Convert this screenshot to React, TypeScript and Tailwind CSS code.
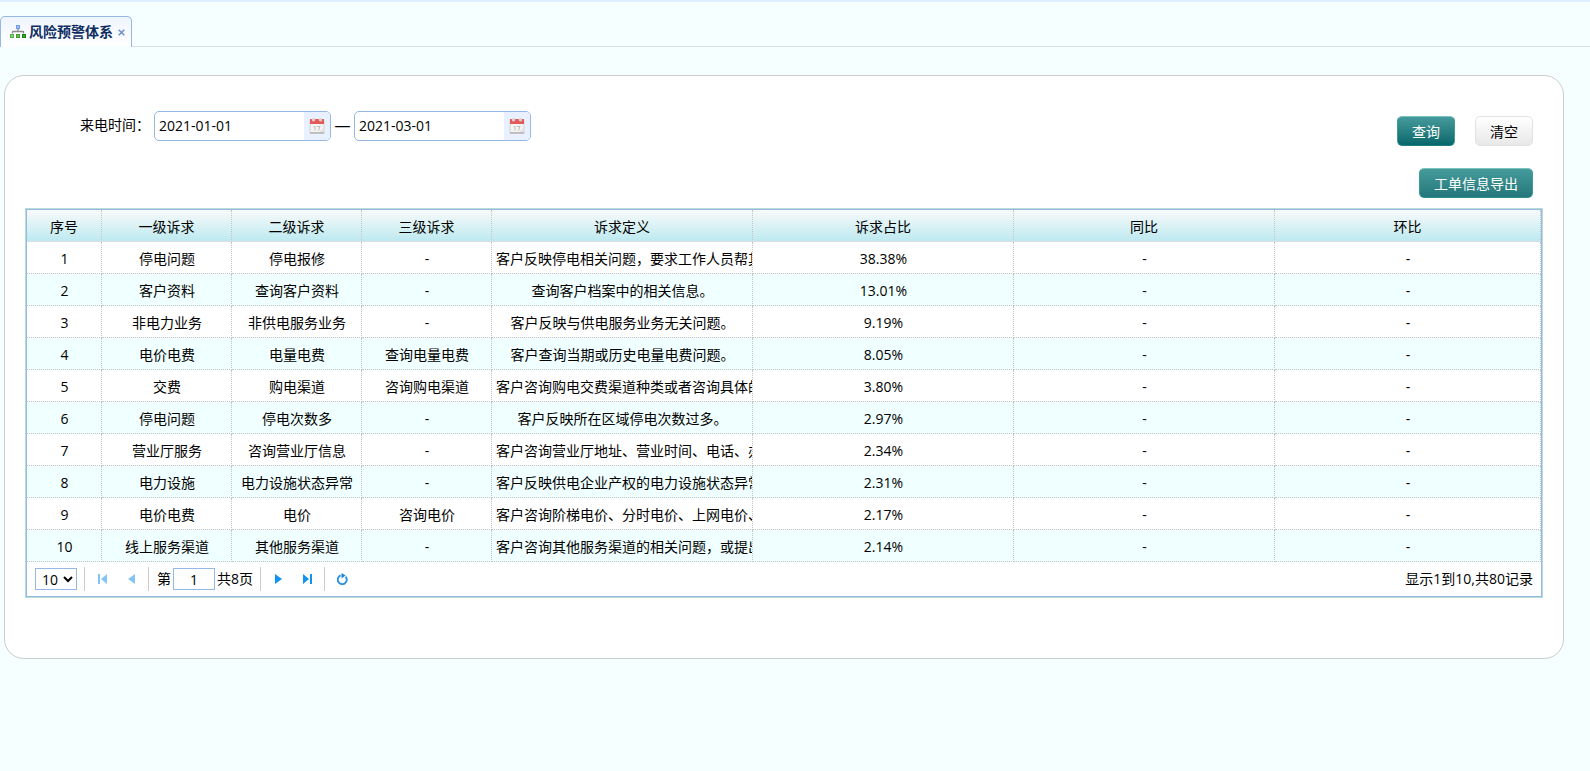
import { useState } from "react";

type Row = [string, string, string, string, string];

const ROWS: Row[] = [
  ["停电问题", "停电报修", "-", "客户反映停电相关问题，要求工作人员帮其处理。", "38.38%"],
  ["客户资料", "查询客户资料", "-", "查询客户档案中的相关信息。", "13.01%"],
  ["非电力业务", "非供电服务业务", "-", "客户反映与供电服务业务无关问题。", "9.19%"],
  ["电价电费", "电量电费", "查询电量电费", "客户查询当期或历史电量电费问题。", "8.05%"],
  ["交费", "购电渠道", "咨询购电渠道", "客户咨询购电交费渠道种类或者咨询具体的渠道。", "3.80%"],
  ["停电问题", "停电次数多", "-", "客户反映所在区域停电次数过多。", "2.97%"],
  ["营业厅服务", "咨询营业厅信息", "-", "客户咨询营业厅地址、营业时间、电话、办理业务。", "2.34%"],
  ["电力设施", "电力设施状态异常", "-", "客户反映供电企业产权的电力设施状态异常问题。", "2.31%"],
  ["电价电费", "电价", "咨询电价", "客户咨询阶梯电价、分时电价、上网电价、电价政策。", "2.17%"],
  ["线上服务渠道", "其他服务渠道", "-", "客户咨询其他服务渠道的相关问题，或提出建议。", "2.14%"],
];

const HEADERS = ["序号", "一级诉求", "二级诉求", "三级诉求", "诉求定义", "诉求占比", "同比", "环比"];

function OrgIcon() {
  return (
    <svg width="16" height="14" viewBox="0 0 16 14" aria-hidden="true">
      <path d="M8 4v3M2.5 8.5V7q0-.5.5-.5h10q.5 0 .5.5v1.5" fill="none" stroke="#8a8a8a" strokeWidth="1.3" />
      <rect x="6" y="0" width="4" height="4" fill="#6d9ae8" />
      <rect x="7" y="1" width="2" height="2" fill="#a4c3f5" />
      <rect x="0" y="9" width="4" height="4" fill="#5aae4c" />
      <rect x="1" y="10" width="2" height="2" fill="#8bcb7d" />
      <rect x="6" y="9" width="4" height="4" fill="#3f9e2f" />
      <rect x="7" y="10" width="2" height="2" fill="#6dbb5c" />
      <rect x="12" y="9" width="4" height="4" fill="#1f7d18" />
      <rect x="13" y="10" width="2" height="2" fill="#3fa332" />
    </svg>
  );
}

function CalendarIcon() {
  return (
    <svg width="16" height="18" viewBox="0 0 16 18" aria-hidden="true">
      <rect x="1" y="3" width="14" height="13.5" rx="1" fill="#f4f4f4" stroke="#cccccc" strokeWidth="0.8" />
      <rect x="1" y="2" width="14" height="5" fill="#e25a5a" />
      <rect x="1" y="15" width="14" height="1.8" fill="#bdbdbd" />
      <circle cx="4.5" cy="2.8" r="1.7" fill="#dcd2d2" />
      <circle cx="11.5" cy="2.8" r="1.7" fill="#dcd2d2" />
      <path d="M4.8 10l1.2-.8v4.4M8 9.5h3l-1.6 4.1" fill="none" stroke="#bcbcbc" strokeWidth="1" />
      <path d="M10.5 15l4.5-4.5V15z" fill="#e2e2e2" />
    </svg>
  );
}

function DateField({ id, label, initial }: { id: string; label: string; initial: string }) {
  const [value, setValue] = useState(initial);
  return (
    <div className="flex h-[30px] w-[177px] overflow-hidden rounded-[5px] border border-[#95b8e7] bg-white">
      <input
        id={id}
        aria-label={label}
        value={value}
        onChange={(e) => setValue(e.target.value)}
        className="min-w-0 flex-1 px-1 text-sm outline-none"
      />
      <button type="button" aria-label="选择日期" className="flex w-[26px] items-center justify-center bg-[#e9f0ff]">
        <CalendarIcon />
      </button>
    </div>
  );
}

function Separator() {
  return <span className="h-6 w-px bg-[#cccccc]" />;
}

export default function App() {
  const [size, setSize] = useState("10");
  const [page, setPage] = useState("1");
  const primary =
    "h-[30px] rounded-[5px] border border-t-[#7cc4bf] border-x-[#3f9a98] text-sm text-white bg-linear-to-b from-[#459b9b]";
  return (
    <div className="min-h-screen border-t-2 border-[#e0ecff] bg-[#f5ffff] font-['Open_Sans','Noto_Sans_CJK_SC',sans-serif] text-sm text-black">
      <nav className="flex items-end border-b border-[#d8e2e4] pt-3.5">
        <div className="-mb-px flex h-[31px] items-center rounded-t-[5px] border border-b-0 border-[#95b8e7] bg-linear-to-b from-[#eff5ff] to-white pr-1.5 pl-[9px]">
          <OrgIcon />
          <a href="#risk" className="ml-[3px] font-bold text-[#0e2d5f]">
            风险预警体系
          </a>
          <button type="button" aria-label="关闭" className="ml-[5px] flex">
            <svg width="7" height="7" viewBox="0 0 7 7" aria-hidden="true">
              <path d="M.7.7l5.6 5.6M6.3.7L.7 6.3" stroke="#6f92cc" strokeWidth="1.6" />
            </svg>
          </button>
        </div>
      </nav>

      <main className="mt-7 mr-[26px] ml-1 rounded-[20px] border border-[#cccccc] bg-white px-5 pb-[60px]">
        <form className="flex items-start pt-[35px] pr-2.5" onSubmit={(e) => e.preventDefault()}>
          <label htmlFor="from" className="ml-[55px] w-[74px] leading-7">
            来电时间：
          </label>
          <DateField id="from" label="开始日期" initial="2021-01-01" />
          <span className="w-[23px] text-center text-base leading-7">—</span>
          <DateField id="to" label="结束日期" initial="2021-03-01" />
          <div className="mt-[5px] ml-auto flex gap-5">
            <button type="submit" className={`${primary} w-[58px] border-b-[#1d7f80] pt-0.5 to-[#03686c]`}>
              查询
            </button>
            <button
              type="reset"
              className="h-[30px] w-[58px] rounded-[5px] border border-[#e2e2e2] bg-linear-to-b from-white to-[#e8e8e8] pt-0.5 text-sm"
            >
              清空
            </button>
          </div>
        </form>
        <div className="flex justify-end pt-[22px] pr-2.5 pb-2.5">
          <button type="button" className={`${primary} w-[114px] border-b-[#2a8f8d] pt-0.5 to-[#24787b]`}>
            工单信息导出
          </button>
        </div>

        <section className="border border-[#b9dcd3]">
          <div className="border border-[#95b8e7]">
            <table className="w-full table-fixed border-separate border-spacing-0 text-center">
              <colgroup>
                <col className="w-[75px]" />
                <col className="w-[130px]" />
                <col className="w-[130px]" />
                <col className="w-[130px]" />
                <col className="w-[261px]" />
                <col className="w-[261px]" />
                <col className="w-[261px]" />
                <col />
              </colgroup>
              <thead>
                <tr className="bg-linear-to-b from-[#f8fafa] to-[#bbe9f0]">
                  {HEADERS.map((h) => (
                    <th
                      key={h}
                      scope="col"
                      className="h-8 border-r border-b border-r-[#c4c4c4] border-b-[#dddddd] px-0 pt-0.5 pb-0 font-normal [border-right-style:dotted]"
                    >
                      {h}
                    </th>
                  ))}
                </tr>
              </thead>
              <tbody>
                {ROWS.map((row, i) => (
                  <tr key={i} className="even:bg-[#f0ffff]">
                    {[String(i + 1), ...row, "-", "-"].map((cell, j) => (
                      <td
                        key={j}
                        className="h-8 overflow-hidden border-r border-b border-dotted border-[#c4c4c4] pt-0.5 pr-[3px] pb-0 pl-1 whitespace-nowrap"
                      >
                        {cell}
                      </td>
                    ))}
                  </tr>
                ))}
              </tbody>
            </table>

            <div className="flex h-[34px] items-center px-2">
              <select
                aria-label="每页条数"
                value={size}
                onChange={(e) => setSize(e.target.value)}
                className="h-[22px] w-[42px] border border-[#95b8e7] bg-white pl-0.5 text-sm"
              >
                <option>10</option>
                <option>20</option>
                <option>50</option>
              </select>
              <div className="ml-[7px] flex items-center">
                <Separator />
                <button type="button" aria-label="第一页" className="flex w-[34px] justify-center">
                  <svg width="9" height="10" viewBox="0 0 9 10" aria-hidden="true">
                    <path d="M0 0h2v10H0zM9 0v10L3 5z" fill="#84c5f6" />
                  </svg>
                </button>
                <button type="button" aria-label="上一页" className="flex w-[29px] justify-center pr-1">
                  <svg width="7" height="10" viewBox="0 0 7 10" aria-hidden="true">
                    <path d="M7 0v10L0 5z" fill="#84c5f6" />
                  </svg>
                </button>
                <Separator />
              </div>
              <label htmlFor="page" className="ml-2">
                第
              </label>
              <input
                id="page"
                value={page}
                onChange={(e) => setPage(e.target.value)}
                className="mx-0.5 h-[22px] w-[42px] border border-[#95b8e7] text-center text-sm outline-none"
              />
              <span>共8页</span>
              <div className="ml-[7px] flex items-center">
                <Separator />
                <button type="button" aria-label="下一页" className="flex w-[34px] justify-center">
                  <svg width="7" height="10" viewBox="0 0 7 10" aria-hidden="true">
                    <path d="M0 0v10l7-5z" fill="#1194f0" />
                  </svg>
                </button>
                <button type="button" aria-label="最后一页" className="flex w-[29px] justify-center pr-1">
                  <svg width="9" height="10" viewBox="0 0 9 10" aria-hidden="true">
                    <path d="M7 0h2v10H7zM0 0v10l6-5z" fill="#1194f0" />
                  </svg>
                </button>
                <Separator />
                <button type="button" aria-label="刷新" className="flex w-[34px] justify-center">
                  <svg width="11" height="12" viewBox="0 0 11 12" aria-hidden="true">
                    <path d="M8.6 3.6a4.5 4.5 0 1 1-4.9-1.2" fill="none" stroke="#2f93e0" strokeWidth="2" />
                    <path d="M4.5 0v5.4L8.6 2.6z" fill="#1b83d6" />
                  </svg>
                </button>
              </div>
              <span className="ml-auto">显示1到10,共80记录</span>
            </div>
          </div>
        </section>
      </main>
    </div>
  );
}
